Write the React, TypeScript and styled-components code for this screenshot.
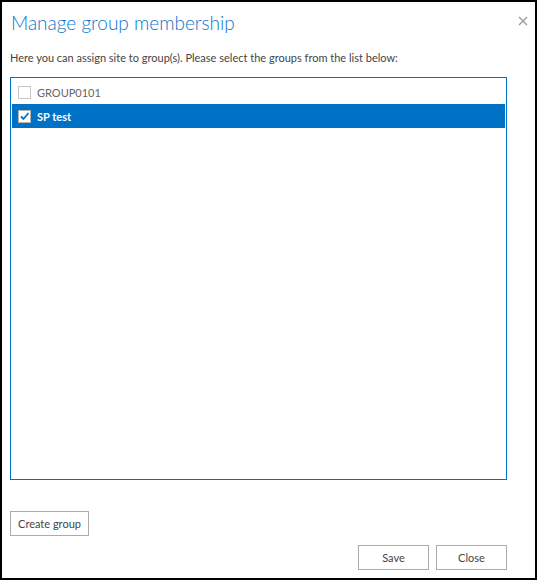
import React from "react";
import styled, { createGlobalStyle } from "styled-components";

const Global = createGlobalStyle`
  html, body { margin: 0; padding: 0; background: #fff; }
  body { font-family: "Lato", "Open Sans", sans-serif; }
`;

const Dialog = styled.div`
  box-sizing: border-box;
  width: 537px;
  height: 580px;
  border: 2px solid #000;
  background: #fff;
  position: relative;
  display: flex;
  flex-direction: column;
  padding: 0 28px 8px 8px;
`;

const Title = styled.h1`
  margin: 9px 0 0 1px;
  font-weight: 300;
  font-size: 19px;
  line-height: 24px;
  color: #0a74cb;
`;

const CloseX = styled.button`
  position: absolute;
  top: 11px;
  right: 4px;
  width: 16px;
  height: 16px;
  padding: 0;
  border: 0;
  background: transparent;
  display: flex;
  align-items: center;
  justify-content: center;
`;

const Description = styled.p`
  margin: 15px 0 0 0;
  font-size: 11px;
  line-height: 16px;
  color: #444;
`;

const ListBox = styled.div`
  margin-top: 11px;
  box-sizing: border-box;
  height: 405px;
  border: 1px solid #0072c6;
  padding: 2px 1px 1px;
  display: flex;
  flex-direction: column;
`;

const Row = styled.div<{ $selected?: boolean }>`
  display: flex;
  align-items: center;
  height: 24px;
  padding-left: 6px;
  gap: 6px;
  background: ${(p) => (p.$selected ? "#0072c6" : "transparent")};
  color: ${(p) => (p.$selected ? "#fff" : "#666")};
  font-weight: ${(p) => (p.$selected ? 700 : 400)};
  font-size: 11px;
`;

const Box = styled.span<{ $checked?: boolean }>`
  box-sizing: border-box;
  width: 13px;
  height: 13px;
  border: 1px solid ${(p) => (p.$checked ? "#b5b5b5" : "#c6c6c6")};
  background: #fff;
  display: inline-flex;
  align-items: center;
  justify-content: center;
`;

const Button = styled.button<{ $w: number }>`
  box-sizing: border-box;
  width: ${(p) => p.$w}px;
  height: 25px;
  border: 1px solid #ababab;
  background: #fff;
  font-family: "Lato", "Open Sans", sans-serif;
  font-size: 11px;
  color: #444;
  padding: 0;
`;

const LeftBar = styled.div`
  margin-top: 31px;
  display: flex;
`;

const RightBar = styled.div`
  margin-top: 9px;
  display: flex;
  justify-content: flex-end;
  gap: 7px;
`;

export default function App() {
  return (
    <>
      <Global />
      <Dialog>
        <Title>Manage group membership</Title>
        <CloseX aria-label="Close">
          <svg width="10" height="10" viewBox="0 0 10 10">
            <path d="M1 1 L9 9 M9 1 L1 9" stroke="#9a9a9a" strokeWidth="1.3" />
          </svg>
        </CloseX>
        <Description>
          Here you can assign site to group(s). Please select the groups from the list below:
        </Description>
        <ListBox>
          <Row>
            <Box />
            GROUP0101
          </Row>
          <Row $selected>
            <Box $checked>
              <svg width="11" height="11" viewBox="0 0 11 11">
                <path d="M2 5.5 L4.5 8 L9.5 2" stroke="#0072c6" strokeWidth="1.8" fill="none" />
              </svg>
            </Box>
            SP test
          </Row>
        </ListBox>
        <LeftBar>
          <Button $w={79}>Create group</Button>
        </LeftBar>
        <RightBar>
          <Button $w={71}>Save</Button>
          <Button $w={71}>Close</Button>
        </RightBar>
      </Dialog>
    </>
  );
}
